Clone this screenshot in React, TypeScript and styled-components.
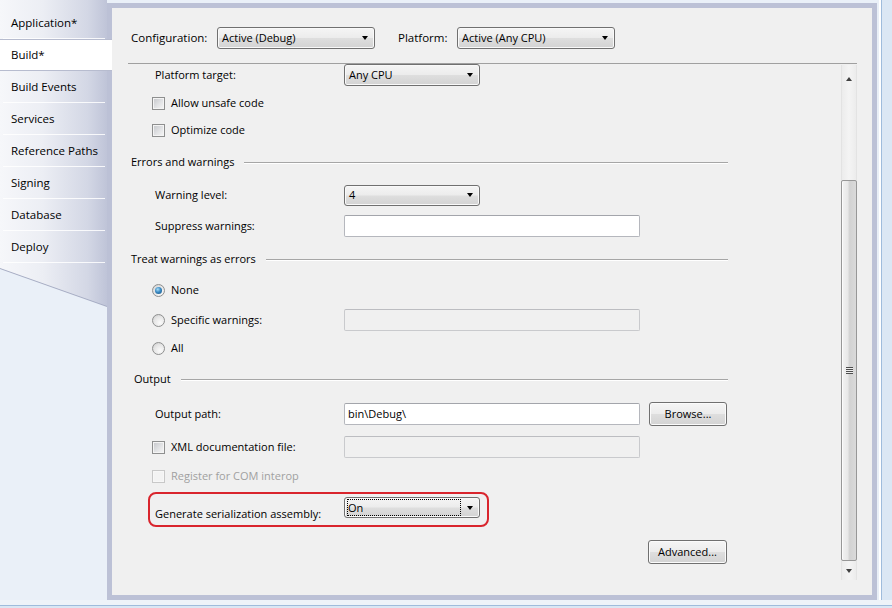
import React from 'react';
import styled, { createGlobalStyle } from 'styled-components';

const GlobalStyle = createGlobalStyle`
  html, body {
    margin: 0;
    padding: 0;
  }
  body {
    width: 892px;
    height: 608px;
    overflow: hidden;
    background: #eaf0f8;
    font-family: 'Open Sans', 'Noto Sans', sans-serif;
    font-size: 11px;
    line-height: 16px;
    color: #000;
  }
`;

const stripGradient = 'linear-gradient(to right, #f6f7fa 0%, #eceef4 40%, #d3d7e5 82%, #bfc4d8 100%)';
const buttonGradient = 'linear-gradient(#f5f5f5, #ececec 48%, #dedede 52%, #d3d3d3)';

const Window = styled.div`
  width: 892px;
  height: 608px;
  display: flex;
  flex-direction: column;
`;

const Top = styled.div`
  height: 600px;
  display: flex;
`;

const BottomEdge = styled.div`
  height: 8px;
  background: linear-gradient(#eef3f9 0 5px, #9fbcdc 5px 6px, #dbe7f4 6px);
`;

const RightEdge = styled.div`
  width: 15px;
  background: linear-gradient(to right, #e9eff7 0 2px, #ffffff 2px 4px, #9fbcdc 4px 5px, #dbe7f4 5px);
`;

/* ---------- left tab strip ---------- */

const TabStrip = styled.div`
  width: 107px;
  display: flex;
  flex-direction: column;
  position: relative;
  z-index: 1;
`;

const TabList = styled.div`
  padding-top: 7px;
  background: ${stripGradient};
  display: flex;
  flex-direction: column;
`;

const Tab = styled.div<{ $active?: boolean }>`
  height: 32px;
  box-sizing: border-box;
  padding-left: 11px;
  display: flex;
  align-items: center;
  position: relative;
  font-size: 11.5px;
  background: ${p => (p.$active ? '#ffffff' : 'transparent')};
  margin-right: ${p => (p.$active ? '-5px' : '0')};
  border-top: ${p => (p.$active ? '1px solid #b7bccf' : '0')};
  border-bottom: ${p => (p.$active ? '1px solid #b7bccf' : '0')};

  &::after {
    content: '';
    display: ${p => (p.$active ? 'none' : 'block')};
    position: absolute;
    left: 3px;
    right: 2px;
    bottom: 0;
    height: 1px;
    background: rgba(255, 255, 255, 0.85);
  }
`;

const TailShadow = styled.div`
  filter: drop-shadow(0 1px 0 #a6acc3);
`;

const Tail = styled.div`
  height: 43px;
  background: ${stripGradient};
  clip-path: polygon(0 0, 100% 0, 100% 100%, 0 5px);
`;

/* ---------- main frame ---------- */

const Frame = styled.div`
  margin-top: 3px;
  width: 770px;
  height: 597px;
  box-sizing: border-box;
  border: 5px solid #bcc1d6;
  background: #f0f0f0;
  display: flex;
  flex-direction: column;
`;

const ConfigBar = styled.div`
  height: 55px;
  box-sizing: border-box;
  padding: 19px 0 0 19px;
  display: flex;
  align-items: flex-start;
`;

const ConfigLabel = styled.span<{ $w: number }>`
  width: ${p => p.$w}px;
  height: 22px;
  display: flex;
  align-items: center;
  font-size: 11.5px;
`;

const Divider = styled.div`
  height: 1px;
  margin: 0 15px 0 16px;
  background: #a0a0a0;
`;

const Body = styled.div`
  height: 516px;
  margin: 0 15px 0 16px;
  display: flex;
`;

const Content = styled.div`
  flex: 1;
  overflow: hidden;
  display: flex;
  flex-direction: column;
`;

const Row = styled.div<{ $h: number }>`
  height: ${p => p.$h}px;
  flex-shrink: 0;
  display: grid;
  grid-template-columns: 216px auto auto;
  justify-content: start;
  align-items: center;
`;

const Label = styled.span<{ $indent?: number; $disabled?: boolean }>`
  padding-left: ${p => p.$indent ?? 27}px;
  color: ${p => (p.$disabled ? '#a0a0a0' : '#000')};
  white-space: nowrap;
`;

const CheckLine = styled.span`
  padding-left: 24px;
  display: flex;
  align-items: center;
  gap: 6px;
`;

const CheckBox = styled.span<{ $disabled?: boolean }>`
  width: 13px;
  height: 13px;
  box-sizing: border-box;
  flex-shrink: 0;
  border: 1px solid ${p => (p.$disabled ? '#c8c8c8' : '#8e8f8f')};
  box-shadow: inset 0 0 0 1px ${p => (p.$disabled ? '#f7f7f7' : '#f4f4f4')};
  background: ${p =>
    p.$disabled ? '#f3f3f3' : 'linear-gradient(135deg, #c4c6ca 0%, #e2e3e5 55%, #f7f7f7 100%)'};
`;

const Radio = styled.span<{ $checked?: boolean }>`
  width: 13px;
  height: 13px;
  box-sizing: border-box;
  flex-shrink: 0;
  border-radius: 50%;
  border: 1px solid #8e8f8f;
  background: radial-gradient(circle at 65% 70%, #fbfbfb 0%, #e6e6e6 55%, #c9c9c9 100%);
  display: flex;
  align-items: center;
  justify-content: center;

  &::after {
    content: '';
    display: ${p => (p.$checked ? 'block' : 'none')};
    width: 7px;
    height: 7px;
    border-radius: 50%;
    background: radial-gradient(circle at 40% 35%, #a9e0fb 0%, #3b8ac3 45%, #144f7e 100%);
  }
`;

const SectionRow = styled.div<{ $h: number; $indent: number }>`
  height: ${p => p.$h}px;
  flex-shrink: 0;
  width: 600px;
  box-sizing: border-box;
  padding-left: ${p => p.$indent}px;
  display: flex;
  align-items: center;
  gap: 10px;
`;

const Rule = styled.span`
  flex: 1;
  height: 1px;
  background: #a6a6a6;
  box-shadow: 0 1px 0 #ffffff;
`;

const Combo = styled.div<{ $w: number; $h?: number }>`
  width: ${p => p.$w}px;
  height: ${p => p.$h ?? 22}px;
  box-sizing: border-box;
  border: 1px solid #707070;
  border-radius: 3px;
  background: ${buttonGradient};
  box-shadow: inset 0 0 0 1px #f9f9f9;
  display: flex;
  align-items: center;
  padding: 0 5px 0 4px;
  gap: 6px;
`;

const ComboText = styled.span<{ $focused?: boolean }>`
  flex: 1;
  height: 17px;
  display: flex;
  align-items: center;
  padding-left: ${p => (p.$focused ? '1px' : '0')};
  margin-left: ${p => (p.$focused ? '-2px' : '0')};
  outline: ${p => (p.$focused ? '1px dotted #000' : 'none')};
  outline-offset: -1px;
`;

const Arrow = styled.span`
  width: 0;
  height: 0;
  margin-right: 1px;
  border-left: 3.5px solid transparent;
  border-right: 3.5px solid transparent;
  border-top: 4px solid #000;
`;

const TextBox = styled.div<{ $disabled?: boolean }>`
  width: 296px;
  height: 22px;
  box-sizing: border-box;
  border: 1px solid ${p => (p.$disabled ? '#c9cacd' : '#b5b7bd')};
  border-top-color: ${p => (p.$disabled ? '#bcbdc1' : '#a3a5ab')};
  border-radius: 2px;
  background: ${p => (p.$disabled ? '#f0f0f0' : '#ffffff')};
  padding-left: 3px;
  display: flex;
  align-items: center;
`;

const Button = styled.div<{ $w: number; $gap?: number }>`
  width: ${p => p.$w}px;
  height: 24px;
  margin-left: ${p => p.$gap ?? 0}px;
  box-sizing: border-box;
  border: 1px solid #707070;
  border-radius: 3px;
  background: ${buttonGradient};
  box-shadow: inset 0 0 0 1px #fbfbfb;
  display: flex;
  align-items: center;
  justify-content: center;
`;

const ButtonRow = styled.div<{ $h: number; $indent: number }>`
  height: ${p => p.$h}px;
  flex-shrink: 0;
  padding-left: ${p => p.$indent}px;
  display: flex;
  align-items: center;
`;

const HighlightRow = styled.div<{ $h: number }>`
  height: ${p => p.$h}px;
  flex-shrink: 0;
  padding-left: 20px;
`;

const Highlight = styled.div`
  width: 341px;
  height: 35px;
  box-sizing: border-box;
  border: 2px solid #d9252d;
  border-radius: 8px;
  padding: 3px 0 0 5px;
  display: flex;
  align-items: flex-start;
`;

const HighlightLabel = styled.span`
  width: 189px;
  margin-top: 9px;
  white-space: nowrap;
`;

/* ---------- scrollbar ---------- */

const ScrollBar = styled.div`
  width: 16px;
  margin-top: 1px;
  height: 515px;
  box-sizing: border-box;
  border-left: 1px solid #e3e3e3;
  border-right: 1px solid #e3e3e3;
  background: linear-gradient(to right, #ececec, #f4f4f4 50%, #ececec);
  display: flex;
  flex-direction: column;
`;

const ScrollButton = styled.div<{ $h: number; $down?: boolean }>`
  height: ${p => p.$h}px;
  flex-shrink: 0;
  display: flex;
  align-items: center;
  justify-content: center;

  &::after {
    content: '';
    width: 0;
    height: 0;
    border-left: 3.5px solid transparent;
    border-right: 3.5px solid transparent;
    border-top: ${p => (p.$down ? '4px solid #404040' : '0')};
    border-bottom: ${p => (p.$down ? '0' : '4px solid #404040')};
  }
`;

const Track = styled.div`
  flex: 1;
  display: flex;
  flex-direction: column;
  padding-top: 87px;
`;

const Thumb = styled.div`
  height: 381px;
  margin: 0 -1px;
  box-sizing: border-box;
  border: 1px solid #979797;
  border-radius: 2px;
  background: linear-gradient(to right, #f3f3f3 0%, #e8e8e8 40%, #d2d2d2 55%, #dadada 100%);
  box-shadow: inset 1px 0 0 #fbfbfb;
  display: flex;
  align-items: center;
  justify-content: center;
`;

const Grip = styled.span`
  width: 7px;
  height: 7px;
  background: repeating-linear-gradient(#4d4d4d 0 1px, #eeeeee 1px 2px);
`;

const tabs = [
  'Application*',
  'Build*',
  'Build Events',
  'Services',
  'Reference Paths',
  'Signing',
  'Database',
  'Deploy',
];

const App: React.FC = () => {
  return (
    <>
      <GlobalStyle />
      <Window>
        <Top>
          <TabStrip>
            <TabList>
              {tabs.map(t => (
                <Tab key={t} $active={t === 'Build*'}>
                  {t}
                </Tab>
              ))}
            </TabList>
            <TailShadow>
              <Tail />
            </TailShadow>
          </TabStrip>

          <Frame>
            <ConfigBar>
              <ConfigLabel $w={86}>Configuration:</ConfigLabel>
              <Combo $w={158}>
                <ComboText>Active (Debug)</ComboText>
                <Arrow />
              </Combo>
              <ConfigLabel $w={23} />
              <ConfigLabel $w={59}>Platform:</ConfigLabel>
              <Combo $w={158}>
                <ComboText>Active (Any CPU)</ComboText>
                <Arrow />
              </Combo>
            </ConfigBar>
            <Divider />
            <Body>
              <Content>
                <Row $h={22}>
                  <Label>Platform target:</Label>
                  <Combo $w={136}>
                    <ComboText>Any CPU</ComboText>
                    <Arrow />
                  </Combo>
                </Row>
                <Row $h={34}>
                  <CheckLine>
                    <CheckBox />
                    Allow unsafe code
                  </CheckLine>
                </Row>
                <Row $h={20}>
                  <CheckLine>
                    <CheckBox />
                    Optimize code
                  </CheckLine>
                </Row>

                <SectionRow $h={44} $indent={3}>
                  Errors and warnings
                  <Rule />
                </SectionRow>
                <Row $h={22}>
                  <Label>Warning level:</Label>
                  <Combo $w={136} $h={21}>
                    <ComboText>4</ComboText>
                    <Arrow />
                  </Combo>
                </Row>
                <Row $h={40}>
                  <Label>Suppress warnings:</Label>
                  <TextBox />
                </Row>

                <SectionRow $h={26} $indent={3}>
                  Treat warnings as errors
                  <Rule />
                </SectionRow>
                <Row $h={36}>
                  <CheckLine>
                    <Radio $checked />
                    None
                  </CheckLine>
                </Row>
                <Row $h={24}>
                  <CheckLine>
                    <Radio />
                    Specific warnings:
                  </CheckLine>
                  <TextBox $disabled />
                </Row>
                <Row $h={32}>
                  <CheckLine>
                    <Radio />
                    All
                  </CheckLine>
                </Row>

                <SectionRow $h={30} $indent={6}>
                  Output
                  <Rule />
                </SectionRow>
                <Row $h={40}>
                  <Label>Output path:</Label>
                  <TextBox>bin\Debug\</TextBox>
                  <Button $w={78} $gap={9}>
                    Browse...
                  </Button>
                </Row>
                <Row $h={26}>
                  <CheckLine>
                    <CheckBox />
                    XML documentation file:
                  </CheckLine>
                  <TextBox $disabled />
                </Row>
                <Row $h={32}>
                  <CheckLine>
                    <CheckBox $disabled />
                    <Label $indent={0} $disabled>
                      Register for COM interop
                    </Label>
                  </CheckLine>
                </Row>
                <HighlightRow $h={42}>
                  <Highlight>
                    <HighlightLabel>Generate serialization assembly:</HighlightLabel>
                    <Combo $w={136} $h={21}>
                      <ComboText $focused>On</ComboText>
                      <Arrow />
                    </Combo>
                  </Highlight>
                </HighlightRow>
                <ButtonRow $h={36} $indent={520}>
                  <Button $w={79}>Advanced...</Button>
                </ButtonRow>
              </Content>

              <ScrollBar>
                <ScrollButton $h={28} />
                <Track>
                  <Thumb>
                    <Grip />
                  </Thumb>
                </Track>
                <ScrollButton $h={18} $down />
              </ScrollBar>
            </Body>
          </Frame>
          <RightEdge />
        </Top>
        <BottomEdge />
      </Window>
    </>
  );
};

export default App;
